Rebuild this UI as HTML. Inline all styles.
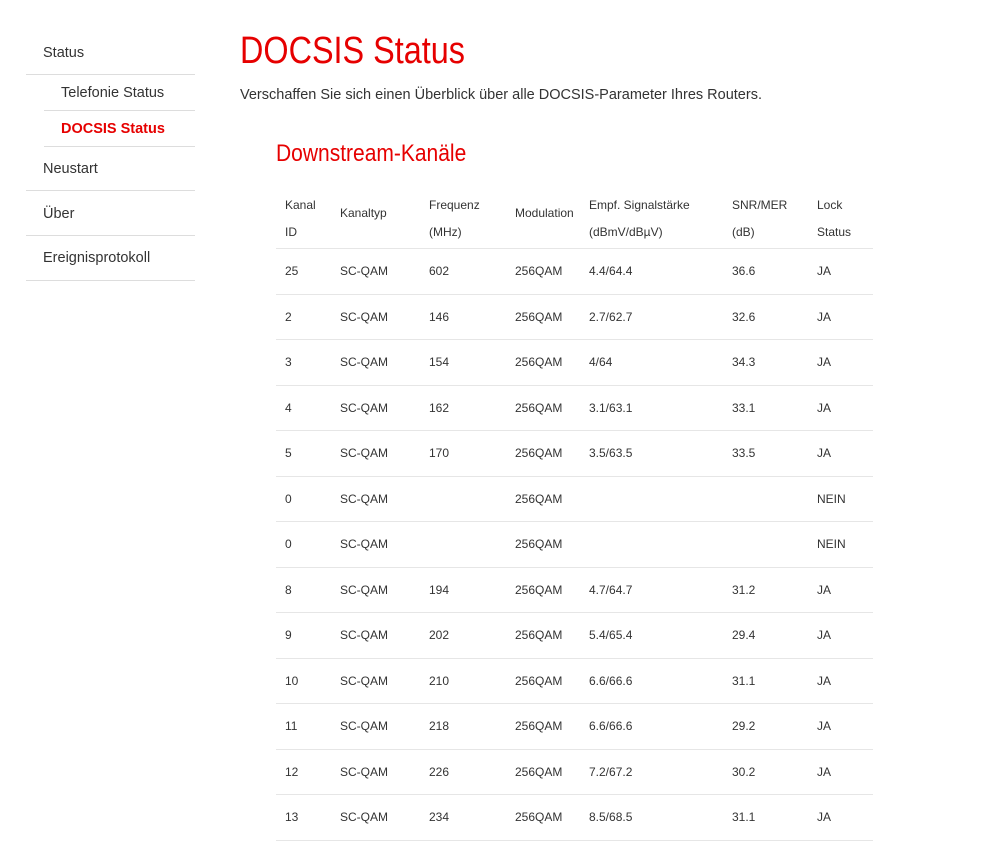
<!DOCTYPE html>
<html><head><meta charset="utf-8"><style>
body{margin:0;width:999px;height:842px;background:#fff;font-family:"Liberation Sans",sans-serif;color:#333;position:relative;overflow:hidden}
.a{position:absolute;white-space:nowrap}
.ln{position:absolute;height:1px;background:#ddd}
.nav{font-size:14.5px;color:#333}
.c{position:absolute;font-size:12px;color:#333}
</style></head><body>
<div class="a nav" style="left:43px;top:45px">Status</div>
<div class="ln" style="left:26px;width:169px;top:74px"></div>
<div class="a nav" style="left:61px;top:85px">Telefonie Status</div>
<div class="ln" style="left:44px;width:151px;top:110px"></div>
<div class="a nav" style="left:61px;top:121px;color:#e60000;font-weight:bold">DOCSIS Status</div>
<div class="ln" style="left:44px;width:151px;top:146px"></div>
<div class="a nav" style="left:43px;top:161px">Neustart</div>
<div class="ln" style="left:26px;width:169px;top:190px"></div>
<div class="a nav" style="left:43px;top:206px">Über</div>
<div class="ln" style="left:26px;width:169px;top:235px"></div>
<div class="a nav" style="left:43px;top:250px">Ereignisprotokoll</div>
<div class="ln" style="left:26px;width:169px;top:280px"></div>

<div class="a" style="left:240px;top:30px;font-size:38px;color:#e60000;transform:scaleX(0.852);transform-origin:0 0">DOCSIS Status</div>
<div class="a" style="left:240px;top:87px;font-size:14.5px">Verschaffen Sie sich einen Überblick über alle DOCSIS-Parameter Ihres Routers.</div>
<div class="a" style="left:276px;top:140px;font-size:24px;color:#e60000;transform:scaleX(0.875);transform-origin:0 0">Downstream-Kanäle</div>

<div class="c" style="left:285px;top:192px;line-height:27px">Kanal<br>ID</div>
<div class="c" style="left:340px;top:206px">Kanaltyp</div>
<div class="c" style="left:429px;top:192px;line-height:27px">Frequenz<br>(MHz)</div>
<div class="c" style="left:515px;top:206px">Modulation</div>
<div class="c" style="left:589px;top:192px;line-height:27px">Empf. Signalstärke<br>(dBmV/dBµV)</div>
<div class="c" style="left:732px;top:192px;line-height:27px">SNR/MER<br>(dB)</div>
<div class="c" style="left:817px;top:192px;line-height:27px">Lock<br>Status</div>
<div id="rows"></div>
<script>
var d=[["25","602","4.4/64.4","36.6","JA"],["2","146","2.7/62.7","32.6","JA"],["3","154","4/64","34.3","JA"],["4","162","3.1/63.1","33.1","JA"],["5","170","3.5/63.5","33.5","JA"],["0","","","","NEIN"],["0","","","","NEIN"],["8","194","4.7/64.7","31.2","JA"],["9","202","5.4/65.4","29.4","JA"],["10","210","6.6/66.6","31.1","JA"],["11","218","6.6/66.6","29.2","JA"],["12","226","7.2/67.2","30.2","JA"],["13","234","8.5/68.5","31.1","JA"]];
var h="";
for(var i=0;i<d.length;i++){var y=248+i*45.5;var r=d[i];
h+='<div class="ln" style="left:276px;width:597px;top:'+Math.round(y)+'px;background:#e6e6e6"></div>';
var t=Math.round(y+16);
var cells=[[285,r[0]],[340,"SC-QAM"],[429,r[1]],[515,"256QAM"],[589,r[2]],[732,r[3]],[817,r[4]]];
for(var j=0;j<cells.length;j++)h+='<div class="c" style="left:'+cells[j][0]+'px;top:'+t+'px">'+cells[j][1]+'</div>';}
h+='<div class="ln" style="left:276px;width:597px;top:840px;background:#e6e6e6"></div>';
document.getElementById("rows").innerHTML=h;
</script>
</body></html>
